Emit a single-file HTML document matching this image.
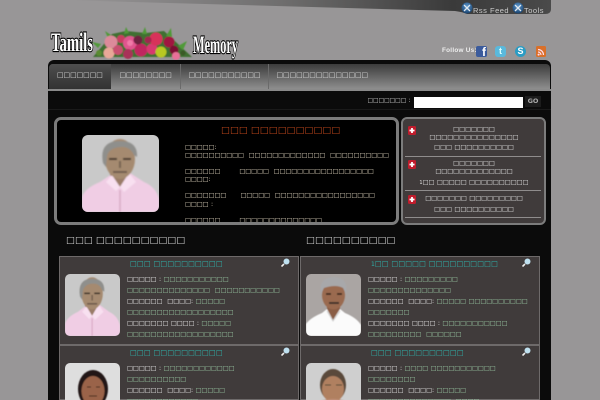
<!DOCTYPE html>
<html lang="ta"><head><meta charset="utf-8"><title>Tamils Memory</title>
<style>
html,body{margin:0;padding:0;width:600px;height:400px;overflow:hidden;background:#989697}
#w{position:absolute;left:0;top:0;width:600px;height:400px;overflow:hidden;font-family:"DejaVu Sans",sans-serif;font-size:6.28px;word-spacing:.4px}
.a{position:absolute;white-space:pre;line-height:11px}
.box{position:absolute;box-sizing:border-box}
.nav{color:#dcdcdc;font-size:6.93px;top:69px;line-height:12px}
.t{color:#d8cdb8;font-size:6.24px;left:128px}
.p{color:#e0e0e0;text-align:center;width:142px;left:403px;font-size:6.3px}
.c{color:#e4e4e4}.g{color:#96c4a0}
.h{color:#2fb0aa;font-size:7.33px}
.hd{color:#d0d0d0;font-size:9.47px;top:234px;line-height:14px;word-spacing:0}
.card{position:absolute;width:240px;height:89px;background:#403b3b;box-sizing:border-box;border:1px solid #6e6a6a}
.mg{position:absolute;width:9px;height:9px}
.ph{position:absolute;width:55px;height:62px;border-radius:5px;overflow:hidden}
svg{display:block}
</style></head><body><div id="w">
<svg class="box" style="left:0;top:0" width="600" height="20">
<defs>
<linearGradient id="tb" x1="0" x2="1" y1="0" y2="0"><stop offset="0" stop-color="#9a9899"/><stop offset=".45" stop-color="#6f6e6e"/><stop offset=".8" stop-color="#3a3a3a"/><stop offset="1" stop-color="#4a4a4a"/></linearGradient>
<radialGradient id="gl" cx=".5" cy=".35" r=".7"><stop offset="0" stop-color="#5f9ad0"/><stop offset="1" stop-color="#123a66"/></radialGradient>
<filter id="bl"><feGaussianBlur stdDeviation=".7"/></filter>
<filter id="b2"><feGaussianBlur stdDeviation=".45"/></filter>
<symbol id="man1" viewBox="0 0 77 77" preserveAspectRatio="none">
<rect width="77" height="77" fill="#c9c9c9"/>
<g filter="url(#bl)">
<path d="M0 77V62Q3 53 18 47L30 39 38 51 48 38 62 47Q74 52 77 64V77Z" fill="#f0cde4"/>
<path d="M28 40L38 52 47 38 45 30H30Z" fill="#9a7c68"/>
<path d="M30 40L24 47 34 56 38 52ZM47 38L54 47 42 57 38 52Z" fill="#f8e0f0"/>
<ellipse cx="38" cy="24" rx="15" ry="20" fill="#a58a70"/>
<path d="M21 28Q17 7 36 6 56 5 55 22L52 20Q48 11 38 12 27 13 25 21L24 32Z" fill="#8f8f8c"/>
<path d="M27 24h8M41 24h8" stroke="#43342a" stroke-width="2"/>
<path d="M38 26v7" stroke="#73604f" stroke-width="2"/><path d="M31 37h14" stroke="#6e5a4c" stroke-width="2"/>
<path d="M38 55V77" stroke="#d8a8c4" stroke-width="1.5"/>
</g></symbol>
<symbol id="man2" viewBox="0 0 55 62" preserveAspectRatio="none">
<rect width="55" height="62" fill="#aaa5a3"/>
<g filter="url(#b2)">
<path d="M0 62V50Q4 44 16 39L21 35H34L39 39Q51 44 55 51V62Z" fill="#fbfbfb"/>
<path d="M21 35L27 46 34 35V28H21Z" fill="#8a5d45"/>
<ellipse cx="27.5" cy="21" rx="11.5" ry="14.5" fill="#9a6a50"/>
<path d="M15 20Q12 4 27 3 43 3 40 20L37 14Q30 10 18 14Z" fill="#a8a8aa"/>
<path d="M20 20h5M31 20h5" stroke="#2b1a14" stroke-width="1.5"/>
<path d="M23 29h10" stroke="#3a2c28" stroke-width="1.8"/>
<path d="M21 37L27 47 34 37" stroke="#ccc" fill="none"/>
</g></symbol>
</defs>
<path d="M60 0L455 11Q463 12 467 14H545Q551 14 551 9V0Z" fill="url(#tb)"/>
<g><circle cx="467" cy="8" r="5.5" fill="url(#gl)"/><path d="M464 5l6 6M470 5l-6 6" stroke="#dfe8f0" stroke-width="1.3"/>
<circle cx="518" cy="8" r="5.5" fill="url(#gl)"/><path d="M515 5l6 6M521 5l-6 6" stroke="#dfe8f0" stroke-width="1.3"/></g>
</svg>
<div class="a" style="left:473px;top:5px;color:#ccc;font:7.5px/11px 'Liberation Sans',sans-serif;letter-spacing:.5px;word-spacing:0">Rss Feed</div>
<div class="a" style="left:524px;top:5px;color:#ccc;font:7.5px/11px 'Liberation Sans',sans-serif;letter-spacing:.5px;word-spacing:0">Tools</div>

<svg class="box" style="left:46px;top:26px" width="200" height="34">
<g font-family="'Liberation Serif',serif" font-weight="bold" fill="#fff" stroke="#000" stroke-width="2.2" paint-order="stroke">
<text x="5" y="25" font-size="26" textLength="42" lengthAdjust="spacingAndGlyphs">Tamils</text>
<text x="147" y="27" font-size="25" textLength="45" lengthAdjust="spacingAndGlyphs">Memory</text>
</g>
<g filter="url(#b2)">
<path d="M47 31L58 18 66 8 80 5 100 7 118 5 132 18 146 31Z" fill="#3f6f30"/>
<path d="M52 22l-6-6 9 2zM62 12l-3-7 6 4zM120 10l5-8 1 9zM132 20l9-5-4 9zM78 8l2-7 3 6zM96 8l3-7 2 7z" fill="#4f9a38"/>
<circle cx="65" cy="16" r="6.5" fill="#dc8a9a"/><circle cx="63" cy="27" r="5.5" fill="#e8a898"/><circle cx="72" cy="24" r="5" fill="#c85070"/><circle cx="75" cy="13" r="4" fill="#c93c60"/>
<circle cx="84" cy="17" r="7" fill="#e0558e"/><circle cx="84" cy="17" r="3" fill="#f07aa8"/><circle cx="82" cy="28" r="5" fill="#a83058"/>
<circle cx="95" cy="24" r="6.5" fill="#c02860"/><circle cx="106" cy="23" r="5.5" fill="#d83870"/><circle cx="92" cy="14" r="4.5" fill="#6e2040"/>
<circle cx="110" cy="13" r="6.5" fill="#d8305a"/><circle cx="123" cy="16" r="5.5" fill="#a01840"/><circle cx="102" cy="14" r="3.5" fill="#a02850"/>
<circle cx="115" cy="26" r="5.5" fill="#b8c820"/><circle cx="128" cy="24" r="4.5" fill="#7a1030"/><circle cx="130" cy="30" r="4" fill="#e87098"/><circle cx="137" cy="27" r="2.5" fill="#3a5a28"/><circle cx="53" cy="27" r="3" fill="#5a8a30"/>
</g>
</svg>

<div class="a" style="left:442px;top:45px;color:#eee;font:bold 6.4px/11px 'Liberation Sans',sans-serif;letter-spacing:.25px;word-spacing:0">Follow Us:</div>
<div class="box" style="left:476px;top:46px;width:11px;height:11px;background:#3b5b9c;border-radius:2px;color:#fff;font:bold 12px/13px 'Liberation Sans',sans-serif;text-align:right;padding-right:1px;overflow:hidden">f</div>
<div class="box" style="left:495px;top:46px;width:11px;height:11px;background:#5ab9dc;border-radius:3px;color:#dff;font:bold 9px/11px 'Liberation Sans',sans-serif;text-align:center">t</div>
<div class="box" style="left:515px;top:46px;width:11px;height:11px;background:#2a9cc4;border-radius:50%;color:#fff;font:bold 9px/11px 'Liberation Sans',sans-serif;text-align:center">S</div>
<svg class="box" style="left:536px;top:46px" width="10" height="11"><rect width="10" height="11" rx="1.5" fill="#d9702a"/><path d="M2 3.5a5.5 5.5 0 0 1 5.5 5.5M2 6a3 3 0 0 1 3 3" stroke="#fde" fill="none" stroke-width="1.2"/><circle cx="2.6" cy="8.6" r="1" fill="#fde"/></svg>

<div class="box" style="left:48px;top:60px;width:503px;height:340px;background:#0b0b0b;border-radius:6px 6px 0 0;overflow:hidden">
 <div class="box" style="left:1px;top:4px;width:501px;height:25px;background:linear-gradient(#3c3c3c,#8e8e8e);border-radius:4px 4px 0 0"></div>
 <div class="box" style="left:1px;top:4px;width:62px;height:25px;background:linear-gradient(#4e4e4e,#323232);border-radius:4px 0 0 0"></div>
 <div class="box" style="left:132px;top:4px;width:1px;height:25px;background:#6a6a6a"></div>
 <div class="box" style="left:220px;top:4px;width:1px;height:25px;background:#6a6a6a"></div>
 <div class="box" style="left:0;top:29px;width:503px;height:2px;background:#8a8a8a"></div>
 <div class="box" style="left:0;top:49px;width:503px;height:1px;background:#1a1a1a"></div>
</div>
<div class="a nav" style="left:57px">□□□□□□□</div>
<div class="a nav" style="left:119.5px">□□□□□□□□</div>
<div class="a nav" style="left:188.5px">□□□□□□□□□□□</div>
<div class="a nav" style="left:276.5px">□□□□□□□□□□□□□□</div>

<div class="a" style="left:367.5px;top:96px;color:#ccc;font-size:5.87px">□□□□□□□ :</div>
<div class="box" style="left:414px;top:97px;width:109px;height:11px;background:#fff"></div>
<div class="box" style="left:525px;top:96px;width:16px;height:11px;background:#1c1c1c;color:#aaa;font:bold 6.5px/11px 'DejaVu Sans',sans-serif;text-align:center">GO</div>

<div class="box" style="left:54px;top:117px;width:345px;height:108px;background:#000;border:3px solid #7c7c7c;border-radius:7px;overflow:hidden">
 <div class="a" style="left:164px;top:4px;color:#b8441a;font-size:9.47px;line-height:14px;word-spacing:0">□□□ □□□□□□□□□□</div>
 <div class="a t" style="top:22px">□□□□□:</div>
 <div class="a t" style="top:30px">□□□□□□□□□□  □□□□□□□□□□□□□  □□□□□□□□□□</div>
 <div class="a t" style="top:46px">□□□□□□        □□□□□  □□□□□□□□□□□□□□□□□</div>
 <div class="a t" style="top:54px">□□□□:</div>
 <div class="a t" style="top:70px">□□□□□□□      □□□□□  □□□□□□□□□□□□□□□□□</div>
 <div class="a t" style="top:79px">□□□□ :</div>
 <div class="a t" style="top:95px">□□□□□□        □□□□□□□□□□□□□□</div>
</div>
<div class="box" style="left:82px;top:135px;width:77px;height:77px;border-radius:6px;overflow:hidden"><svg width="77" height="77"><use href="#man1" width="77" height="77"/></svg></div>

<div class="box" style="left:401px;top:117px;width:145px;height:108px;background:#403b3b;border:2px solid #7c7c7c;border-radius:6px"></div>
<div class="box" style="left:405px;top:156px;width:136px;height:1px;background:#8f8c8c"></div>
<div class="box" style="left:405px;top:190px;width:136px;height:1px;background:#8f8c8c"></div>
<div class="box" style="left:405px;top:217px;width:136px;height:1px;background:#8f8c8c"></div>
<div class="a p" style="top:124px">□□□□□□□</div>
<div class="a p" style="top:132px">□□□□□□□□□□□□□□□</div>
<div class="a p" style="top:142px">□□□ □□□□□□□□□□</div>
<div class="a p" style="top:158px">□□□□□□□</div>
<div class="a p" style="top:166px">□□□□□□□□□□□□□</div>
<div class="a p" style="top:177px"><span style="font-size:5px">1</span>□□ □□□□□ □□□□□□□□□□</div>
<div class="a p" style="top:193px">□□□□□□□ □□□□□□□□□</div>
<div class="a p" style="top:204px">□□□ □□□□□□□□□□</div>
<svg class="box" style="left:408px;top:126px" width="9" height="82">
<rect width="8" height="9" rx="1.5" fill="#c01c2c"/><path d="M4 2v5M1.5 4.5h5" stroke="#fff" stroke-width="1.8"/>
<g transform="translate(0,34)"><rect width="8" height="9" rx="1.5" fill="#c01c2c"/><path d="M4 2v5M1.5 4.5h5" stroke="#fff" stroke-width="1.8"/></g>
<g transform="translate(0,69)"><rect width="8" height="9" rx="1.5" fill="#c01c2c"/><path d="M4 2v5M1.5 4.5h5" stroke="#fff" stroke-width="1.8"/></g>
</svg>

<div class="a hd" style="left:66px">□□□ □□□□□□□□□□</div>
<div class="a hd" style="left:306px">□□□□□□□□□□</div>

<div class="card" style="left:59px;top:256px"></div>
<div class="card" style="left:59px;top:345px;height:55px"></div>
<div class="card" style="left:300px;top:256px"></div>
<div class="card" style="left:300px;top:345px;height:55px"></div>

<div class="a h" style="left:130px;top:258px">□□□ □□□□□□□□□□</div>
<div class="a h" style="left:130px;top:347px">□□□ □□□□□□□□□□</div>
<div class="a h" style="left:371px;top:258px"><span style="font-size:6px">1</span>□□ □□□□□ □□□□□□□□□□</div>
<div class="a h" style="left:371px;top:347px">□□□ □□□□□□□□□□</div>

<div class="a c" style="left:127px;top:274px">□□□□□ : <span class="g">□□□□□□□□□□□</span></div>
<div class="a g" style="left:127px;top:285px">□□□□□□□□□□□□□□  □□□□□□□□□□□</div>
<div class="a c" style="left:127px;top:296px">□□□□□□  □□□□: <span class="g">□□□□□</span></div>
<div class="a g" style="left:127px;top:307px">□□□□□□□□□□□□□□□□□□</div>
<div class="a c" style="left:127px;top:318px">□□□□□□□ □□□□ : <span class="g">□□□□□</span></div>
<div class="a g" style="left:127px;top:329px">□□□□□□□□□□□□□□□□□□</div>

<div class="a c" style="left:127px;top:363px">□□□□□ : <span class="g">□□□□□□□□□□□□</span></div>
<div class="a g" style="left:127px;top:374px">□□□□□□□□□□</div>
<div class="a c" style="left:127px;top:385px">□□□□□□  □□□□: <span class="g">□□□□□</span></div>
<div class="a g" style="left:127px;top:396px">□□□□□□□□□□□□</div>

<div class="a c" style="left:368px;top:274px">□□□□□ : <span class="g">□□□□□□□□□</span></div>
<div class="a g" style="left:368px;top:285px">□□□□□□□□□□□□□□</div>
<div class="a c" style="left:368px;top:296px">□□□□□□  □□□□: <span class="g">□□□□□ □□□□□□□□□□</span></div>
<div class="a g" style="left:368px;top:307px">□□□□□□□</div>
<div class="a c" style="left:368px;top:318px">□□□□□□□ □□□□ : <span class="g">□□□□□□□□□□□</span></div>
<div class="a g" style="left:368px;top:329px">□□□□□□□□□  □□□□□□</div>

<div class="a c" style="left:368px;top:363px">□□□□□ : <span class="g">□□□□ □□□□□□□□□□□</span></div>
<div class="a g" style="left:368px;top:374px">□□□□□□□□</div>
<div class="a c" style="left:368px;top:385px">□□□□□□  □□□□: <span class="g">□□□□□</span></div>
<div class="a g" style="left:368px;top:396px">□□□□□□□□□□□□□□  □□□□</div>

<div class="ph" style="left:65px;top:274px"><svg width="55" height="62"><use href="#man1" width="55" height="62"/></svg></div>
<div class="ph" style="left:306px;top:274px"><svg width="55" height="62"><use href="#man2" width="55" height="62"/></svg></div>
<div class="ph" style="left:65px;top:363px;background:#dedede"><svg width="55" height="62"><g filter="url(#b2)"><ellipse cx="28" cy="26" rx="15" ry="19" fill="#221816"/><ellipse cx="28" cy="28" rx="11.5" ry="15" fill="#9a6448"/><path d="M22 24h4M31 24h4M24 33h8" stroke="#3a2418"/></g></svg></div>
<div class="ph" style="left:306px;top:363px;background:#cfcfcf"><svg width="55" height="62"><g filter="url(#b2)"><ellipse cx="27" cy="22" rx="13" ry="16" fill="#5a4a3a"/><ellipse cx="27" cy="26" rx="11" ry="13" fill="#b08060"/><path d="M10 40Q27 32 44 40V62H10Z" fill="#c09078"/><path d="M19 22h6M30 22h6" stroke="#443"/></g></svg></div>

<svg class="mg" style="left:281px;top:258px"><circle cx="5.5" cy="3.5" r="3" fill="#bfe0ef"/><path d="M3 6L0.5 8.5" stroke="#eee" stroke-width="1.6"/></svg>
<svg class="mg" style="left:281px;top:347px"><circle cx="5.5" cy="3.5" r="3" fill="#bfe0ef"/><path d="M3 6L0.5 8.5" stroke="#eee" stroke-width="1.6"/></svg>
<svg class="mg" style="left:522px;top:258px"><circle cx="5.5" cy="3.5" r="3" fill="#bfe0ef"/><path d="M3 6L0.5 8.5" stroke="#eee" stroke-width="1.6"/></svg>
<svg class="mg" style="left:522px;top:347px"><circle cx="5.5" cy="3.5" r="3" fill="#bfe0ef"/><path d="M3 6L0.5 8.5" stroke="#eee" stroke-width="1.6"/></svg>
</div></body></html>
